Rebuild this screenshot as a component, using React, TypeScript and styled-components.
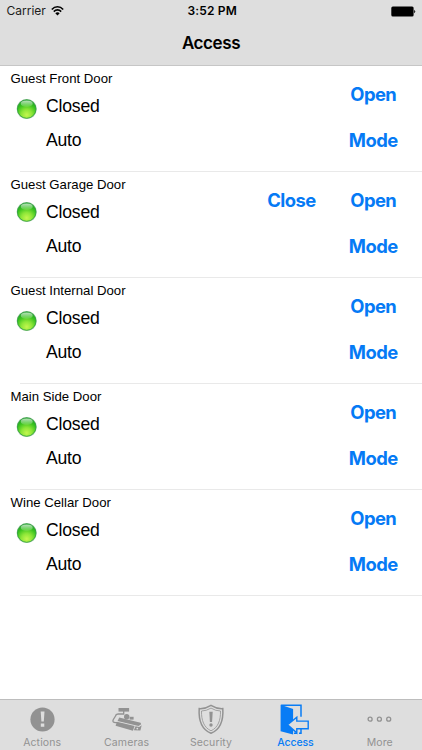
import React from "react";
import styled, { createGlobalStyle } from "styled-components";

const GlobalStyle = createGlobalStyle`
  * { box-sizing: border-box; }
  body { margin: 0; background: #fff; }
`;

const Screen = styled.div`
  width: 422px;
  height: 750px;
  display: flex;
  flex-direction: column;
  overflow: hidden;
  background: #fff;
  color: #000;
  font-family: Inter, "Liberation Sans", sans-serif;
`;

const Header = styled.header`
  height: 66px;
  flex: none;
  background: #dedede;
  border-bottom: 1px solid #c6c6c6;
`;

const StatusBar = styled.div`
  height: 22px;
  padding: 0 6px 0 6.5px;
  display: grid;
  grid-template-columns: 1fr auto 1fr;
  align-items: center;
  font-size: 12px;
  line-height: 22px;
`;

const Carrier = styled.div`
  display: flex;
  align-items: center;
  gap: 5px;
  color: #1c1c1c;
  letter-spacing: 0;
`;

const Clock = styled.div`
  font-weight: 600;
  padding-left: 2px;
  letter-spacing: 0.15px;
`;

const BatterySlot = styled.div`
  display: flex;
  justify-content: flex-end;
`;

const Title = styled.h1`
  margin: 0;
  height: 43px;
  line-height: 43px;
  text-align: center;
  font-size: 17px;
  font-weight: 600;
  letter-spacing: -0.4px;
`;

const DoorList = styled.main`
  flex: 1;
`;

const DoorRow = styled.section`
  height: 106px;
  display: grid;
  grid-template-columns: 46px 1fr 81px 99px;
  grid-template-rows: 23px 34px 34px;
  font-family: "Liberation Sans", Arial, sans-serif;
  background: linear-gradient(#e9e9e9, #e9e9e9) 20px 100% / 402px 1px no-repeat;
`;

const DoorName = styled.h2`
  grid-column: 1 / 3;
  margin: 0;
  padding-left: 10.5px;
  font-size: 13.2px;
  font-weight: 400;
  line-height: 26px;
`;

const Status = styled.div`
  grid-column: 2;
  font-size: 17.6px;
  line-height: 35px;
  letter-spacing: -0.2px;
`;

const Light = styled.div<{ $top: number }>`
  grid-column: 1;
  grid-row: 2 / 4;
  padding: ${(p) => p.$top}px 0 0 16px;
  line-height: 0;
`;

const Action = styled.button<{ $column: number; $bottom?: boolean }>`
  grid-column: ${(p) => p.$column};
  grid-row: ${(p) => (p.$bottom ? "3" : "1 / 3")};
  height: ${(p) => (p.$bottom ? 34 : 56)}px;
  border: 0;
  padding: 0 0 0 ${(p) => (p.$column === 3 ? 18 : 1.5)}px;
  background: none;
  color: #057af5;
  font: 700 18.4px/34px Inter, sans-serif;
  letter-spacing: -0.55px;
  text-align: center;
`;

const TabBar = styled.nav`
  height: 51px;
  flex: none;
  display: grid;
  grid-template-columns: repeat(5, 1fr);
  background: #dedede;
  border-top: 1px solid #bdbdbd;
`;

const Tab = styled.button<{ $active?: boolean }>`
  display: flex;
  flex-direction: column;
  align-items: center;
  padding: 3px 0 0;
  border: 0;
  background: none;
  color: ${(p) => (p.$active ? "#087cf5" : "#929292")};
  font: ${(p) => (p.$active ? 500 : 400)} 10.5px/14px Inter, sans-serif;
  letter-spacing: ${(p) => (p.$active ? -0.15 : 0.12)}px;
  svg { display: block; margin-bottom: 1px; }
`;

const WifiIcon = () => (
  <svg width="13" height="10" viewBox="0 0 13 10" fill="none" stroke="#000" strokeWidth="1.6">
    <path d="M.8 3.5C4-.1 9-.1 12.2 3.5M2.8 5.6C5 3.3 8 3.3 10.2 5.6" />
    <path d="M4.3 7.3C5.6 6 7.4 6 8.7 7.3L6.5 9.5Z" fill="#000" stroke="none" />
  </svg>
);

const BatteryIcon = () => (
  <svg width="26" height="11" viewBox="0 0 26 11">
    <rect x="1.3" y=".5" width="22.3" height="10" rx="1.5" />
    <path d="M24.2 3.7Q26.2 5.5 24.2 7.3Z" />
  </svg>
);

const GreenLight = () => (
  <svg width="22" height="22" viewBox="0 0 22 22">
    <defs>
      <radialGradient id="orb" cx=".5" cy=".82" r=".82">
        <stop offset="0" stopColor="#c4f64f" />
        <stop offset=".35" stopColor="#8de638" />
        <stop offset=".68" stopColor="#3cc41f" />
        <stop offset="1" stopColor="#169a22" />
      </radialGradient>
      <linearGradient id="shine" x1="0" y1="0" x2="0" y2="1">
        <stop offset="0" stopColor="#fff" stopOpacity=".7" />
        <stop offset="1" stopColor="#fff" stopOpacity=".08" />
      </linearGradient>
    </defs>
    <circle cx="10.7" cy="11" r="10.1" fill="#b5cfb5" />
    <circle cx="10.7" cy="11" r="9.3" fill="url(#orb)" stroke="#2b9f3c" strokeWidth=".8" />
    <ellipse cx="10.7" cy="5.7" rx="6" ry="3.3" fill="url(#shine)" />
  </svg>
);

const ActionsIcon = () => (
  <svg width="32" height="32" viewBox="0 0 32 32">
    <circle cx="16.5" cy="16.5" r="12.1" fill="currentColor" />
    <path d="M14.7 8.5h3.8l-.7 10h-2.4zM14.8 20.4h3.5v3.3h-3.5z" fill="#dedede" />
  </svg>
);

const CamerasIcon = () => (
  <svg width="32" height="32" viewBox="0 0 32 32" fill="currentColor">
    <path d="M7.5 5h10.6v3.6H7.5z" />
    <path d="M12.7 8v3H7.4Q4.9 11 4.5 13L2.2 16.7Q1 19.6 4.6 19.6H6" fill="none" stroke="currentColor" strokeWidth="1.3" />
    <circle cx="15.7" cy="13.7" r="2.7" />
    <path d="M18.6 13.8h4v2.8h-4z" />
    <path d="M8.2 14.6 29.6 19.8 30.2 21.2 27.5 23 6.6 18z" />
    <path d="M5.9 18.8 23.6 23.1 21.9 27.7 4.6 22.7z" />
    <path d="M24.5 23.2 28.2 24 30.7 22.3 29.4 27.5 22.9 27.3z" />
    <circle cx="26.3" cy="25.6" r=".9" fill="#dedede" />
  </svg>
);

const SecurityIcon = () => (
  <svg width="32" height="32" viewBox="0 0 32 32" fill="none" stroke="currentColor">
    <path d="M16 2.3Q10.2 6 4.2 5.6C3.5 16.7 6.5 26.4 16 30.3C25.5 26.4 28.5 16.7 27.8 5.6Q21.8 6 16 2.3Z" strokeWidth="1.5" />
    <path d="M16 5.1Q11.3 8 6.5 8C6.3 17.1 8.8 24.5 16 27.8C23.2 24.5 25.7 17.1 25.5 8Q20.7 8 16 5.1Z" strokeWidth=".8" />
    <path d="M14.3 8.8h3.4l-.6 10.2h-2.2z" fill="currentColor" stroke="none" />
    <circle cx="16" cy="22" r="1.7" fill="currentColor" stroke="none" />
  </svg>
);

const AccessIcon = () => (
  <svg width="32" height="32" viewBox="0 0 32 32">
    <path d="M2.1 2.2H22v11.6M22 25.5v4.7h-2M18 30.2h-3" fill="none" stroke="currentColor" strokeWidth="1.5" />
    <path d="M1.6 1.7 14.1 6v25.4L1.6 28.2z" fill="currentColor" />
    <path d="m8.6 21.8 9.2-7.6v3.9h11.4v7.7H17.8v4.1z" fill="#dedede" stroke="currentColor" strokeWidth="1.4" />
  </svg>
);

const MoreIcon = () => (
  <svg width="32" height="32" viewBox="0 0 32 32" fill="none" stroke="currentColor" strokeWidth="1.3">
    <circle cx="6.1" cy="16.2" r="2" />
    <circle cx="15.4" cy="16.2" r="2" />
    <circle cx="24.7" cy="16.2" r="2" />
  </svg>
);

const doors = [
  { name: "Guest Front Door", top: 9 },
  { name: "Guest Garage Door", top: 6, closable: true },
  { name: "Guest Internal Door", top: 9 },
  { name: "Main Side Door", top: 9 },
  { name: "Wine Cellar Door", top: 9 },
];

const tabs = [
  { label: "Actions", Icon: ActionsIcon },
  { label: "Cameras", Icon: CamerasIcon },
  { label: "Security", Icon: SecurityIcon },
  { label: "Access", Icon: AccessIcon, active: true },
  { label: "More", Icon: MoreIcon },
];

export default function App() {
  return (
    <Screen>
      <GlobalStyle />
      <Header>
        <StatusBar>
          <Carrier>Carrier <WifiIcon /></Carrier>
          <Clock>3:52 PM</Clock>
          <BatterySlot><BatteryIcon /></BatterySlot>
        </StatusBar>
        <Title>Access</Title>
      </Header>
      <DoorList>
        {doors.map(({ name, top, closable }) => (
          <DoorRow key={name}>
            <DoorName>{name}</DoorName>
            <Light $top={top}><GreenLight /></Light>
            <Status>Closed</Status>
            <Status>Auto</Status>
            {closable && <Action $column={3}>Close</Action>}
            <Action $column={4}>Open</Action>
            <Action $column={4} $bottom>Mode</Action>
          </DoorRow>
        ))}
      </DoorList>
      <TabBar>
        {tabs.map(({ label, Icon, active }) => (
          <Tab key={label} $active={active}><Icon />{label}</Tab>
        ))}
      </TabBar>
    </Screen>
  );
}
